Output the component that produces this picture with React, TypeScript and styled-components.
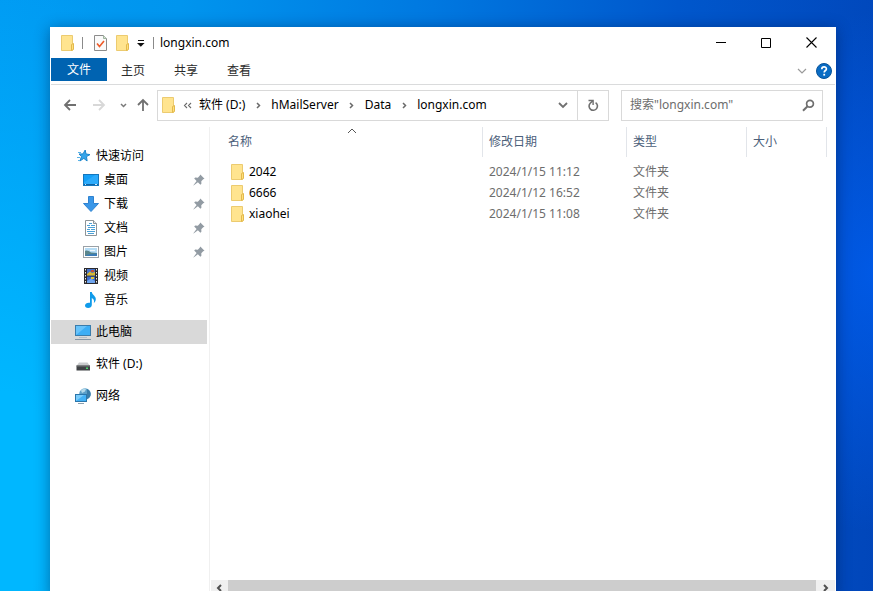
import React from "react";
import styled, { createGlobalStyle, css } from "styled-components";

const GlobalStyle = createGlobalStyle`
  *, *::before, *::after { box-sizing: border-box; }
  body { margin: 0; }
  body, button, input {
    font-family: "Noto Sans", "Noto Sans CJK SC", sans-serif;
    font-size: 12px;
    line-height: 16px;
  }
  button {
    margin: 0;
    padding: 0;
    border: 0;
    background: transparent;
    color: inherit;
    cursor: default;
  }
  svg { display: block; flex: none; }
`;

const Desktop = styled.div`
  height: 100vh;
  overflow: hidden;
  padding: 27px 37px 0 50px;
  background:
    radial-gradient(ellipse 160px 260px at 100% 46%, rgba(0, 92, 236, 0.85), rgba(0, 92, 236, 0)),
    radial-gradient(ellipse 300px 520px at 0 84%, #00b7ff 20%, rgba(0, 183, 255, 0)),
    linear-gradient(93deg, #009bf3 0%, #0095ee 20%, #0078e0 48%, #0057cc 75%, #0146ba 100%);
`;

const Window = styled.main`
  display: flex;
  flex-direction: column;
  height: calc(100vh - 21px);
  padding: 0 1px;
  background: #fff;
  box-shadow: 0 2px 14px rgba(0, 20, 60, 0.45);
`;

const TitleBar = styled.header`
  display: flex;
  align-items: center;
  height: 31px;
  padding-left: 10px;
`;

const QuickTools = styled.div`
  display: flex;
  align-items: center;
`;

const ToolButton = styled.button<{ $width: number }>`
  display: flex;
  align-items: center;
  justify-content: center;
  width: ${(p) => p.$width}px;
  height: 24px;
`;

const Divider = styled.span`
  width: 1px;
  height: 12px;
  background: #8a8a8a;
`;

const Title = styled.h1`
  flex: 1;
  margin: 0;
  padding-left: 1px;
  font-size: 12px;
  font-weight: 400;
  color: #000;
`;

const CaptionButton = styled.button<{ $width?: number }>`
  display: flex;
  align-items: center;
  justify-content: center;
  width: ${(p) => p.$width ?? 45}px;
  height: 30px;
`;

const Ribbon = styled.nav`
  display: flex;
  align-items: flex-start;
  gap: 1px;
  height: 27px;
  border-bottom: 1px solid #dadbdc;
`;

const RibbonTab = styled.button<{ $primary?: boolean }>`
  height: 26px;
  padding: 0 14px;
  color: #2b2b2b;
  ${(p) =>
    p.$primary &&
    css`
      height: 23px;
      padding: 0 16px;
      margin-right: -1px;
      background: #0063b1;
      color: #fff;
    `}
`;

const RibbonEnd = styled.div`
  display: flex;
  align-items: center;
  gap: 9px;
  height: 26px;
  margin-left: auto;
  padding-right: 3px;
`;

const AddressRow = styled.div`
  display: flex;
  align-items: center;
  height: 42px;
  padding: 0 12px 2px 7px;
`;

const History = styled.div`
  display: flex;
  margin-right: 1px;
`;

const AddressBar = styled.div`
  display: flex;
  align-items: center;
  flex: 1;
  height: 31px;
  min-width: 0;
  border: 1px solid #d9d9d9;
`;

const Crumbs = styled.div`
  display: flex;
  align-items: center;
  flex: 1;
  padding-left: 4px;
  color: #000;
`;

const CrumbGap = styled.span<{ $width: number }>`
  display: flex;
  align-items: center;
  justify-content: center;
  width: ${(p) => p.$width}px;
`;

const RefreshButton = styled.button`
  display: flex;
  align-items: center;
  justify-content: center;
  width: 31px;
  height: 29px;
  border-left: 1px solid #d9d9d9;
`;

const SearchBox = styled.label`
  display: flex;
  align-items: center;
  width: 202px;
  height: 31px;
  margin-left: 12px;
  padding: 0 7px 0 8px;
  border: 1px solid #d9d9d9;
`;

const SearchInput = styled.input`
  flex: 1;
  min-width: 0;
  padding: 0;
  border: 0;
  outline: 0;
  background: transparent;
  color: #000;
  &::placeholder { color: #6d6d6d; opacity: 1; }
`;

const Body = styled.div`
  display: flex;
  flex: 1;
  min-height: 0;
`;

const Sidebar = styled.nav`
  flex: none;
  width: 159px;
  padding: 17px 2px 0 0;
  border-right: 1px solid #f0f0f0;
`;

const NavGroup = styled.div`
  margin-bottom: 8px;
`;

const NavItem = styled.button<{ $child?: boolean; $selected?: boolean }>`
  display: flex;
  align-items: center;
  gap: 5px;
  width: 100%;
  height: 24px;
  padding: 0 2px 0 ${(p) => (p.$child ? 32 : 24)}px;
  background: ${(p) => (p.$selected ? "#d9d9d9" : "transparent")};
  color: #000;
  text-align: left;
`;

const NavLabel = styled.span`
  flex: 1;
`;

const Content = styled.section`
  display: flex;
  flex-direction: column;
  flex: 1;
  min-width: 0;
`;

const FileArea = styled.div`
  flex: 1;
  overflow: hidden;
`;

const FileTable = styled.table`
  width: 100%;
  table-layout: fixed;
  border-collapse: separate;
  border-spacing: 0;
`;

const HeadCell = styled.th<{ $width?: number }>`
  position: relative;
  width: ${(p) => (p.$width ? `${p.$width}px` : "auto")};
  height: 30px;
  padding: 0 0 0 6px;
  border-right: ${(p) => (p.$width ? "1px solid #e2e5ea" : "0")};
  color: #4c607a;
  font-weight: 400;
  text-align: left;
  &:first-child { padding-left: 18px; }
`;

const SortMark = styled.span`
  position: absolute;
  top: 1px;
  left: calc(50% + 1px);
`;

const Cell = styled.td`
  height: 21px;
  padding: 0 0 0 6px;
  color: #6d6d6d;
  white-space: nowrap;
`;

const NameCell = styled(Cell)`
  padding-left: 21px;
  color: #000;
`;

const FileName = styled.span`
  display: flex;
  align-items: center;
  gap: 5px;
`;

const TableBody = styled.tbody`
  &::before {
    content: "";
    display: block;
    height: 4px;
  }
`;

const Scrollbar = styled.div`
  display: flex;
  height: 17px;
  margin: 0 0 0 1px;
  background: #f0f0f0;
`;

const ScrollButton = styled.button<{ $width: number }>`
  display: flex;
  align-items: center;
  justify-content: center;
  width: ${(p) => p.$width}px;
  height: 15px;
`;

const ScrollThumb = styled.div`
  flex: 1;
  background: #cdcdcd;
`;

const FolderIcon = () => (
  <svg width="13" height="16" viewBox="0 0 13 16">
    <path d="M.5.5h11v15H.5z" fill="#ffe48f" stroke="#eccb70" />
    <path d="M10.5 9.5l2-1v6l-2 1z" fill="#ffe07c" stroke="#e3b94c" />
  </svg>
);

const PropertiesIcon = () => (
  <svg width="13" height="16" viewBox="0 0 13 16">
    <path d="M.5.5h9l3 3v12H.5z" fill="#fafafa" stroke="#8c8c8c" />
    <path d="M9.5.5v3h3" fill="#d3e8d3" stroke="#9fb39f" />
    <path d="M3 8.5l2.5 3L10 6" fill="none" stroke="#ee5a28" strokeWidth="1.6" />
  </svg>
);

const CustomizeIcon = () => (
  <svg width="8" height="9" viewBox="0 0 8 9">
    <path d="M1 2.5h6" stroke="#111" />
    <path d="M0 5h7.6L3.8 8.8z" fill="#111" />
  </svg>
);

const Chevron = ({ d, w, h, color, stroke = 1.5 }: { d: string; w: number; h: number; color: string; stroke?: number }) => (
  <svg width={w} height={h} viewBox={`0 0 ${w} ${h}`}>
    <path d={d} fill="none" stroke={color} strokeWidth={stroke} />
  </svg>
);

const HelpIcon = () => (
  <svg width="16" height="16" viewBox="0 0 16 16">
    <circle cx="8" cy="8" r="7.5" fill="#0a6cc4" stroke="#07539a" />
    <path d="M5.8 6.2c0-3 4.6-2.9 4.6-.3 0 1.7-2.2 1.6-2.2 3.6" fill="none" stroke="#fff" strokeWidth="1.7" />
    <rect x="7.3" y="10.8" width="1.8" height="1.8" fill="#fff" />
  </svg>
);

const ArrowIcon = ({ dir, color }: { dir: "left" | "right" | "up"; color: string }) => {
  const d = {
    left: "M13 7H2M7 2L2 7l5 5",
    right: "M1 7h11M7 2l5 5-5 5",
    up: "M7 13V2M2 7l5-5 5 5",
  }[dir];
  return <Chevron d={d} w={14} h={14} color={color} stroke={1.8} />;
};

const RefreshIcon = () => (
  <svg width="12" height="13" viewBox="0 0 12 13">
    <path d="M8.6 3.6A4.2 4.2 0 1 1 3.2 4.2L5.6 2" fill="none" stroke="#6f6f6f" strokeWidth="1.6" />
    <path d="M1.5 1.5h4.6V6" fill="none" stroke="#6f6f6f" strokeWidth="1.4" />
  </svg>
);

const SearchIcon = () => (
  <svg width="13" height="13" viewBox="0 0 13 13">
    <circle cx="8" cy="4.8" r="3.4" fill="none" stroke="#6f6f6f" strokeWidth="1.7" />
    <path d="M5.6 7.2L1 11.8" stroke="#6f6f6f" strokeWidth="2" />
  </svg>
);

const PinIcon = () => (
  <svg width="12" height="12" viewBox="0 0 12 12">
    <path d="M7.3.5l4.200 4.200-1.300.6-1.900 1.900.1 2.600-1 1-2.500-2.600L.6 11.500l-.2-.2 3.200-4.200L1.200 4.600l1-1 2.600.1 1.900-1.900z" fill="#929ba3" />
  </svg>
);

const icons: Record<string, React.ReactNode> = {
  quick: (
    <svg width="16" height="16" viewBox="0 0 16 16">
      <path d="M10.2 2l.8 4 4 .6-3.500 2 .6 4.400-3.300-2.600-3.900 2.600 1.600-4.400L4 6l4-.1z" fill="#35a5ea" stroke="#1c86cc" />
      <path d="M3 4.500h3M2 9.500h3M3 12.500h2" stroke="#5ab2e6" />
    </svg>
  ),
  desktop: (
    <svg width="16" height="16" viewBox="0 0 16 16">
      <rect x=".5" y="2.5" width="15" height="11" fill="#14a0f8" stroke="#1577bd" />
      <path d="M1 10.5L12 3h3v9H1z" fill="#2dabfb" />
      <path d="M1 12.5h14" stroke="#0f64a6" />
      <path d="M2 12.5h1M12 12.5h2" stroke="#cfe9fa" />
    </svg>
  ),
  download: (
    <svg width="16" height="16" viewBox="0 0 16 16">
      <path d="M5.5.5h5v7h5L8 15.5.5 7.5h5z" fill="#3a97e8" stroke="#2f82d0" />
    </svg>
  ),
  document: (
    <svg width="16" height="16" viewBox="0 0 16 16">
      <path d="M2.5.5h8l3 3v12h-11z" fill="#fff" stroke="#8d9498" />
      <path d="M10.5.5v3h3" fill="#e6eaed" stroke="#8d9498" />
      <path d="M6 3.5h3M4 5.5h3M8 5.5h4M5 7.5h7M4 9.5h3M8 9.5h4M4 11.5h8M5 13.5h6" stroke="#4ba0d6" />
    </svg>
  ),
  picture: (
    <svg width="16" height="16" viewBox="0 0 16 16">
      <rect x=".5" y="2.5" width="15" height="11" fill="#fff" stroke="#9aa1a7" />
      <rect x="2" y="4" width="12" height="8" fill="#b5dcf5" />
      <path d="M2 7c2-1 4 0 6 1.500l6 .5v3H2z" fill="#5a868c" />
      <path d="M5 10.500l9-1V12H2z" fill="#3a7cb8" />
      <path d="M7 6.500h5" stroke="#eef8ff" />
    </svg>
  ),
  video: (
    <svg width="16" height="16" viewBox="0 0 16 16">
      <rect x="1" y="0" width="14" height="16" fill="#2a2a2e" />
      <rect x="4" y="1" width="8" height="6.5" fill="#4672c8" />
      <rect x="4" y="8.5" width="8" height="6.5" fill="#3a69cc" />
      <path d="M4 6l3-2.500L9 5l3-1v3.500H4z" fill="#d9b832" />
      <path d="M8 2h3v2H8z" fill="#c2503c" />
      <path d="M4 13l4-2.500 4 2.500v2H4z" fill="#6fa5ee" />
      <path d="M8 9h3v2H8z" fill="#e2c53b" />
      <path d="M2.500 1v15M13.500 1v15" stroke="#e9e9e9" strokeDasharray="1.500 1.500" />
    </svg>
  ),
  music: (
    <svg width="16" height="16" viewBox="0 0 16 16">
      <path d="M7 0h1.800c.3 3 4.400 4 4 7.500-.2 1.700-1.200 3-2 3.700.6-2.300.2-4.200-2-5.200v7c0 1.800-1.700 3-3.700 3S2 15 2 13.500c0-1.900 2.500-3.300 5-2.700z" fill="#109bea" />
    </svg>
  ),
  computer: (
    <svg width="16" height="16" viewBox="0 0 16 16">
      <rect x=".5" y="1.5" width="15" height="10" fill="#3daef5" stroke="#3a7cab" />
      <path d="M1 11V2h11z" fill="#68c3fa" />
      <path d="M4 13.5h8" stroke="#b5bec6" />
      <path d="M0 15.5h16" stroke="#8797a6" />
    </svg>
  ),
  drive: (
    <svg width="16" height="16" viewBox="0 0 16 16">
      <path d="M4 6.500h8.500L15 10H1.500z" fill="#c9cbcd" />
      <rect x="1.500" y="9.500" width="13.500" height="5" fill="#3f4245" />
      <path d="M1.500 10h13.500" stroke="#77797b" />
      <rect x="11" y="11.500" width="2" height="1.500" fill="#49d86a" />
    </svg>
  ),
  network: (
    <svg width="16" height="16" viewBox="0 0 16 16">
      <circle cx="10" cy="6" r="5.800" fill="#5b9fc8" />
      <path d="M6 2.500C8 0 10.500 0 11 1l-1 2.500-3 1.500z" fill="#b4d9ea" />
      <path d="M12 1c2.500 1 4 3.500 3.600 6-.4 2-1.600 3-3.600 4z" fill="#3a7ca8" />
      <rect x=".5" y="6.500" width="11" height="7" fill="#43b1f6" stroke="#2b75aa" />
      <path d="M1 13V7h8z" fill="#7accfb" />
      <path d="M3 15.500h6" stroke="#8aa0b0" />
    </svg>
  ),
};

const quickItems = [
  { icon: "desktop", label: "桌面", pinned: true },
  { icon: "download", label: "下载", pinned: true },
  { icon: "document", label: "文档", pinned: true },
  { icon: "picture", label: "图片", pinned: true },
  { icon: "video", label: "视频", pinned: false },
  { icon: "music", label: "音乐", pinned: false },
];

const places = [
  { icon: "computer", label: "此电脑", selected: true },
  { icon: "drive", label: "软件 (D:)", selected: false },
  { icon: "network", label: "网络", selected: false },
];

const crumbs = ["软件 (D:)", "hMailServer", "Data", "longxin.com"];

const files = [
  { name: "2042", date: "2024/1/15 11:12", type: "文件夹" },
  { name: "6666", date: "2024/1/12 16:52", type: "文件夹" },
  { name: "xiaohei", date: "2024/1/15 11:08", type: "文件夹" },
];

export default function App() {
  return (
    <>
      <GlobalStyle />
      <Desktop>
        <Window>
          <TitleBar>
            <QuickTools>
              <FolderIcon />
              <ToolButton as="span" $width={16}>
                <Divider />
              </ToolButton>
              <ToolButton $width={20} aria-label="属性">
                <PropertiesIcon />
              </ToolButton>
              <ToolButton $width={25} aria-label="新建文件夹">
                <FolderIcon />
              </ToolButton>
              <ToolButton $width={12} aria-label="自定义快速访问工具栏">
                <CustomizeIcon />
              </ToolButton>
              <ToolButton as="span" $width={12}>
                <Divider />
              </ToolButton>
            </QuickTools>
            <Title>longxin.com</Title>
            <CaptionButton aria-label="最小化">
              <Chevron d="M0 5.5h10" w={10} h={11} color="#000" stroke={1} />
            </CaptionButton>
            <CaptionButton aria-label="最大化">
              <Chevron d="M.5.5h9v9h-9z" w={10} h={10} color="#000" stroke={1} />
            </CaptionButton>
            <CaptionButton $width={47} aria-label="关闭">
              <Chevron d="M.5.5l10 10M10.5.5l-10 10" w={11} h={11} color="#000" stroke={1.1} />
            </CaptionButton>
          </TitleBar>

          <Ribbon>
            <RibbonTab $primary>文件</RibbonTab>
            <RibbonTab>主页</RibbonTab>
            <RibbonTab>共享</RibbonTab>
            <RibbonTab>查看</RibbonTab>
            <RibbonEnd>
              <button aria-label="展开功能区">
                <Chevron d="M1 1l4 4 4-4" w={10} h={6} color="#9a9a9a" stroke={1.2} />
              </button>
              <button aria-label="帮助">
                <HelpIcon />
              </button>
            </RibbonEnd>
          </Ribbon>

          <AddressRow>
            <History>
              <ToolButton $width={24} aria-label="后退">
                <ArrowIcon dir="left" color="#707070" />
              </ToolButton>
              <ToolButton $width={34} aria-label="前进">
                <ArrowIcon dir="right" color="#d8d8d8" />
              </ToolButton>
              <ToolButton $width={14} aria-label="最近浏览的位置">
                <Chevron d="M1 1l2.5 2.5L6 1" w={7} h={5} color="#7a7a7a" stroke={1.5} />
              </ToolButton>
              <ToolButton $width={26} aria-label="上移">
                <ArrowIcon dir="up" color="#707070" />
              </ToolButton>
            </History>
            <AddressBar>
              <Crumbs>
                <FolderIcon />
                <CrumbGap $width={24}>
                  <Chevron d="M4 1L1.5 3.5 4 6M8 1L5.5 3.5 8 6" w={9} h={7} color="#6a6a6a" stroke={1.1} />
                </CrumbGap>
                {crumbs.map((crumb, i) => (
                  <React.Fragment key={crumb}>
                    {i > 0 && (
                      <CrumbGap $width={26}>
                        <Chevron d="M1 1l2.5 2.5L1 6" w={5} h={7} color="#6a6a6a" stroke={1.5} />
                      </CrumbGap>
                    )}
                    <button>{crumb}</button>
                  </React.Fragment>
                ))}
              </Crumbs>
              <ToolButton $width={28} aria-label="以前的位置">
                <Chevron d="M1 1l4 4 4-4" w={10} h={7} color="#707070" stroke={1.8} />
              </ToolButton>
              <RefreshButton aria-label="刷新">
                <RefreshIcon />
              </RefreshButton>
            </AddressBar>
            <SearchBox>
              <SearchInput aria-label="搜索" placeholder={'搜索"longxin.com"'} />
              <SearchIcon />
            </SearchBox>
          </AddressRow>

          <Body>
            <Sidebar>
              <NavGroup>
                <NavItem>
                  {icons.quick}
                  <NavLabel>快速访问</NavLabel>
                </NavItem>
                {quickItems.map((item) => (
                  <NavItem key={item.label} $child>
                    {icons[item.icon]}
                    <NavLabel>{item.label}</NavLabel>
                    {item.pinned && <PinIcon />}
                  </NavItem>
                ))}
              </NavGroup>
              {places.map((place) => (
                <NavGroup key={place.label}>
                  <NavItem $selected={place.selected}>
                    {icons[place.icon]}
                    <NavLabel>{place.label}</NavLabel>
                  </NavItem>
                </NavGroup>
              ))}
            </Sidebar>

            <Content>
              <FileArea>
                <FileTable>
                  <thead>
                    <tr>
                      <HeadCell $width={273} scope="col">
                        <SortMark>
                          <Chevron d="M1 5l4-4 4 4" w={10} h={6} color="#555" stroke={1} />
                        </SortMark>
                        <button>名称</button>
                      </HeadCell>
                      <HeadCell $width={144} scope="col"><button>修改日期</button></HeadCell>
                      <HeadCell $width={120} scope="col"><button>类型</button></HeadCell>
                      <HeadCell $width={80} scope="col"><button>大小</button></HeadCell>
                      <HeadCell as="td" />
                    </tr>
                  </thead>
                  <TableBody>
                    {files.map((file) => (
                      <tr key={file.name}>
                        <NameCell>
                          <FileName>
                            <FolderIcon />
                            {file.name}
                          </FileName>
                        </NameCell>
                        <Cell>{file.date}</Cell>
                        <Cell>{file.type}</Cell>
                        <Cell />
                        <Cell />
                      </tr>
                    ))}
                  </TableBody>
                </FileTable>
              </FileArea>
              <Scrollbar>
                <ScrollButton $width={17} aria-label="向左滚动">
                  <Chevron d="M5 1L2 4l3 3" w={7} h={8} color="#505050" stroke={2} />
                </ScrollButton>
                <ScrollThumb />
                <ScrollButton $width={19} aria-label="向右滚动">
                  <Chevron d="M2 1l3 3-3 3" w={7} h={8} color="#505050" stroke={2} />
                </ScrollButton>
              </Scrollbar>
            </Content>
          </Body>
        </Window>
      </Desktop>
    </>
  );
}
